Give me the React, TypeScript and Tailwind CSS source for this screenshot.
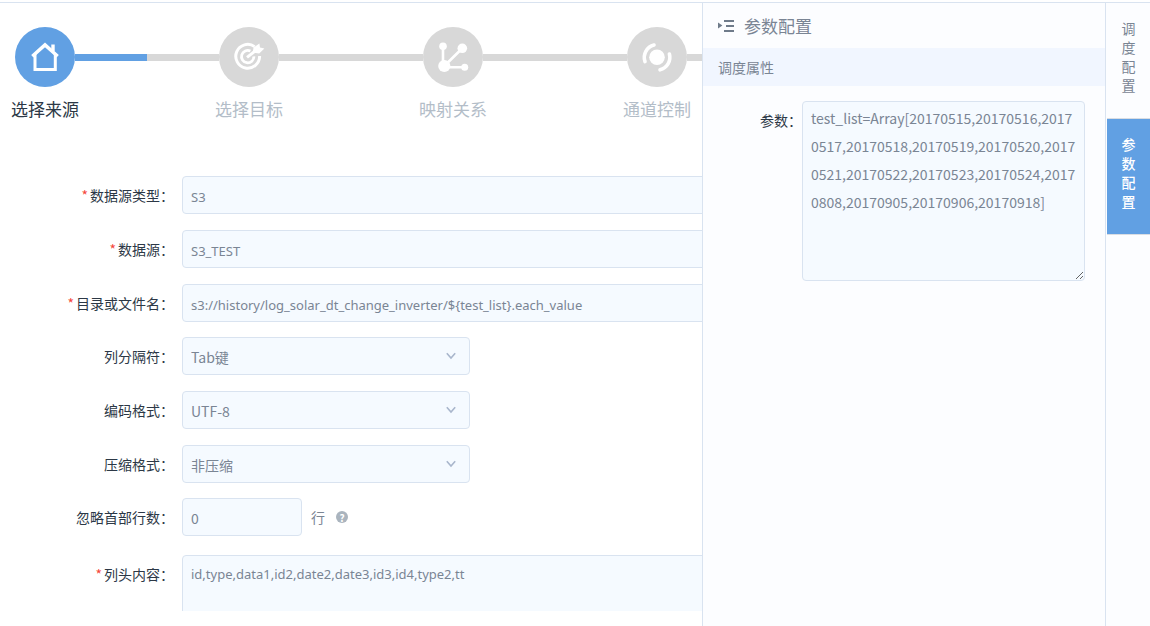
import type { ReactNode } from 'react';

const box = 'rounded border border-[#d9e3f0] bg-[#f5faff] pl-2 text-[#7a8594] outline-none';
const latin = "font-['Noto_Sans','Noto_Sans_CJK_SC',sans-serif] text-[13px]";

function HomeIcon() {
  return (
    <svg viewBox="0 0 60 60" className="size-full" fill="none" stroke="#fff" strokeWidth="3">
      <path d="M20 27V42.5H40.3V27" />
      <path d="M17.3 29.3 30 17.9 42.7 29.3" strokeWidth="3.4" />
      <path d="M38 17.5V24" strokeWidth="3.4" />
    </svg>
  );
}

function TargetIcon() {
  return (
    <svg viewBox="0 0 60 60" className="size-full" fill="none" stroke="#fff">
      <path d="M35.6 19.6A11.9 11.9 0 1 0 40.6 29" strokeWidth="3" />
      <path d="M31.4 24A6.2 6.2 0 1 0 34.9 29.4" strokeWidth="2.8" />
      <path d="M28 30.4 38 22.6" strokeWidth="3" />
      <path d="M33.6 25.6 34.6 20.6 40.4 16.4 41 20.4 45.4 21.4 40.2 26.6Z" fill="#fff" stroke="none" />
    </svg>
  );
}

function MappingIcon() {
  return (
    <svg viewBox="0 0 60 60" className="size-full" fill="#fff" stroke="#fff">
      <path d="M20 19.3V39M21.3 39 39.3 21.3M21.3 40.3H41.7" fill="none" strokeWidth="2.6" />
      <g stroke="none">
        <circle cx="20" cy="19.3" r="3.8" />
        <circle cx="39.3" cy="21.3" r="4.8" />
        <circle cx="21.3" cy="39" r="6.1" />
        <circle cx="41.7" cy="40.3" r="3.5" />
      </g>
    </svg>
  );
}

function ChannelIcon() {
  return (
    <svg viewBox="0 0 60 60" className="size-full" fill="none" stroke="#fff" strokeWidth="3.6" strokeLinecap="round">
      <circle cx="30" cy="30.3" r="7.8" fill="#fff" stroke="none" />
      <path d="M27 18A12.8 12.8 0 0 0 18 34.6" />
      <path d="M42.4 27A12.8 12.8 0 0 1 33 42.8" />
    </svg>
  );
}

const steps = [
  { label: '选择来源', icon: <HomeIcon />, active: true },
  { label: '选择目标', icon: <TargetIcon />, active: false },
  { label: '映射关系', icon: <MappingIcon />, active: false },
  { label: '通道控制', icon: <ChannelIcon />, active: false },
];

function Stepper() {
  return (
    <ol className="flex pl-[15px] pt-6">
      {steps.map((s) => (
        <li key={s.label} className="w-[204px] shrink-0">
          <div className="flex items-center">
            <span
              className={`size-[60px] shrink-0 rounded-full ${s.active ? 'bg-[#61a0e3]' : 'bg-[#d8d8d8]'}`}
            >
              {s.icon}
            </span>
            <span className="flex h-[7px] flex-1 bg-[#d8d8d8]">
              {s.active && <span className="w-1/2 bg-[#61a0e3]" />}
            </span>
          </div>
          <div
            className={`mt-2.5 w-[60px] text-[17px] leading-6 ${s.active ? 'text-[#2c3846]' : 'text-[#b3bdc8]'}`}
          >
            <span className="-mx-1 block whitespace-nowrap text-center">{s.label}</span>
          </div>
        </li>
      ))}
    </ol>
  );
}

interface RowProps {
  id: string;
  label: string;
  required?: boolean;
  top?: boolean;
  children: ReactNode;
}

function Row({ id, label, required, top, children }: RowProps) {
  return (
    <div className={`flex ${top ? 'items-start' : 'items-center'}`}>
      <label
        htmlFor={id}
        className={`w-[182px] shrink-0 pr-2 text-right text-sm text-[#2c3846] ${top ? 'pt-[9px]' : ''}`}
      >
        {required && <span className="mr-0.5 text-[#f5483b]">*</span>}
        {label}：
      </label>
      {children}
    </div>
  );
}

function TextField({ id, value }: { id: string; value: string }) {
  return (
    <input id={id} defaultValue={value} className={`${box} ${latin} h-[38px] w-[600px] shrink-0 pt-1`} />
  );
}

function SelectField({ id, value }: { id: string; value: string }) {
  return (
    <div className="relative w-72">
      <select id={id} className={`${box} h-[38px] w-full appearance-none pt-0.5 text-sm`}>
        <option>{value}</option>
      </select>
      <svg
        viewBox="0 0 12 8"
        className="pointer-events-none absolute right-[13px] top-[15px] h-2 w-3"
        fill="none"
        stroke="#a9b6cc"
        strokeWidth="1.6"
      >
        <path d="M1.8 1.2 6 6 10.2 1.2" />
      </svg>
    </div>
  );
}

function SourceForm() {
  return (
    <form className="mt-[55px]">
      <div className="flex flex-col gap-[15px]">
        <div className="flex flex-col gap-4">
          <Row id="type" label="数据源类型" required>
            <TextField id="type" value="S3" />
          </Row>
          <Row id="source" label="数据源" required>
            <TextField id="source" value="S3_TEST" />
          </Row>
          <Row id="path" label="目录或文件名" required>
            <TextField id="path" value="s3://history/log_solar_dt_change_inverter/${test_list}.each_value" />
          </Row>
        </div>
        <div className="flex flex-col gap-4">
          <Row id="delimiter" label="列分隔符">
            <SelectField id="delimiter" value="Tab键" />
          </Row>
          <Row id="encoding" label="编码格式">
            <SelectField id="encoding" value="UTF-8" />
          </Row>
          <Row id="compression" label="压缩格式">
            <SelectField id="compression" value="非压缩" />
          </Row>
        </div>
        <Row id="skip" label="忽略首部行数">
          <input id="skip" defaultValue="0" className={`${box} h-[38px] w-[120px] pt-0.5 text-sm`} />
          <span className="ml-[9px] text-sm text-[#7a8594]">行</span>
          <span className="ml-[11px] flex size-3 items-center justify-center rounded-full bg-[#aab4be] text-[10px] font-bold text-white">
            ?
          </span>
        </Row>
      </div>
      <div className="mt-[19px]">
        <Row id="headers" label="列头内容" required top>
          <textarea
            id="headers"
            defaultValue="id,type,data1,id2,date2,date3,id3,id4,type2,tt"
            className={`${box} ${latin} h-[120px] w-[600px] shrink-0 resize-none py-1 leading-7`}
          />
        </Row>
      </div>
    </form>
  );
}

function ConfigPanel() {
  return (
    <aside className="w-[403px] shrink-0 border-l border-[#d9e3f0] bg-[#fcfdff]">
      <header className="flex h-[45px] items-center gap-2.5 pl-[15px] text-[#7a8594]">
        <button type="button" aria-label="收起">
          <svg viewBox="0 0 16 12" className="h-3 w-4" fill="#6f7b8a">
            <path d="M0 2.6 4.4 5.6 0 8.6Z" />
            <path d="M6 0H16V2H6ZM8 5H16V7H8ZM6 10H16V12H6Z" />
          </svg>
        </button>
        <h2 className="text-[17px]">参数配置</h2>
      </header>
      <h3 className="flex h-[38px] items-center bg-[#f1f6ff] pl-[15px] text-sm text-[#7a8594]">
        调度属性
      </h3>
      <div className="mt-[15px] flex items-start pr-5">
        <label htmlFor="params" className="w-[99px] shrink-0 pt-[9px] text-right text-sm text-[#2c3846]">
          参数：
        </label>
        <textarea
          id="params"
          defaultValue="test_list=Array[20170515,20170516,20170517,20170518,20170519,20170520,20170521,20170522,20170523,20170524,20170808,20170905,20170906,20170918]"
          className={`${box} h-[180px] min-w-0 flex-1 resize py-0.5 pr-2 text-sm leading-7 break-all`}
        />
      </div>
    </aside>
  );
}

function SideTabs() {
  const tab = 'flex w-full justify-center border-b border-[#d9dde3] pt-4 pb-[23px] text-sm leading-[19px]';
  return (
    <nav className="w-[45px] shrink-0 border-l border-[#d9e3f0] bg-[#fcfdff] pl-px">
      <button type="button" className={`${tab} text-[#7a8594]`}>
        <span className="w-3.5">调度配置</span>
      </button>
      <button type="button" className={`${tab} bg-[#61a0e3] font-medium text-white`}>
        <span className="w-3.5">参数配置</span>
      </button>
    </nav>
  );
}

export default function App() {
  return (
    <div className="flex h-screen flex-col bg-white pt-0.5 font-['Noto_Sans_CJK_SC',sans-serif]">
      <div className="flex min-h-0 flex-1 border-t border-[#d9e3f0]">
        <main className="mb-[15px] min-w-0 flex-1 overflow-hidden">
          <Stepper />
          <SourceForm />
        </main>
        <ConfigPanel />
        <SideTabs />
      </div>
    </div>
  );
}
